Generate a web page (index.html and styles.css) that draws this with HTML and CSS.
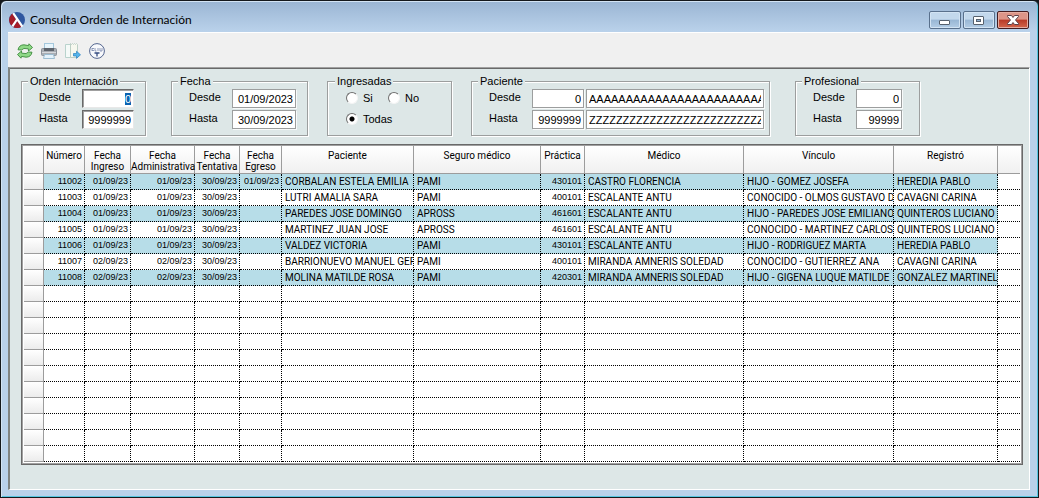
FILE: index.html
```html
<!DOCTYPE html>
<html lang="es">
<head>
<meta charset="utf-8">
<title>Consulta Orden de Internación</title>
<link rel="stylesheet" href="styles.css">
</head>
<body>
<div class="window">
  <header class="titlebar">
    <svg class="icon" viewBox="0 0 16 16" aria-hidden="true">
      <circle cx="8" cy="8" r="8" fill="#2f57a0"/>
      <path d="M2.400 2.400A8 8 0 0 0 3.500 14.600L7.500 8.500 3.500 1.500z M8.500 9L4 15Q8 17.200 12.500 14.700z" fill="#a51c28"/>
      <path d="M4.200 1.200L13.400 14.600M8 7.500L3.400 14.300" stroke="#fff" stroke-width="2.200" fill="none"/>
    </svg>
    <h1 class="title">Consulta Orden de Internación</h1>
    <div class="controls">
      <button class="control" type="button" aria-label="Minimizar"><svg viewBox="0 0 14 12"><rect x="1.500" y="6.500" width="10" height="4" rx=".5" fill="#fff" stroke="#56606d"/></svg></button>
      <button class="control" type="button" aria-label="Maximizar"><svg viewBox="0 0 14 12"><rect x="1.500" y="2.500" width="10" height="8" rx=".5" fill="#fff" stroke="#56606d"/><rect x="4.500" y="5.500" width="4" height="2" fill="#8fafd0" stroke="#56606d"/></svg></button>
      <button class="control control-close" type="button" aria-label="Cerrar"><svg viewBox="0 0 14 12"><path d="M1.500 1.500h4L7 3.500l1.500-2h4v1L9.500 6l3 3.500v1h-4L7 8.500l-1.500 2h-4v-1L4.500 6l-3-3.500z" fill="#fff" stroke="#5d4048"/></svg></button>
    </div>
  </header>
  <nav class="toolbar">
    <button class="tool" type="button" aria-label="Actualizar"><svg class="icon" viewBox="0 0 16 16"><g fill="#8ed886" stroke="#3c8a3c" stroke-width=".9" stroke-linejoin="round"><path d="M1 6.800Q2 1.800 7 1.800L11.500 2.600 12 .8 15.500 4.500 11.500 8 11.300 5.800Q6 4.500 4.500 7z"/><path d="M15 9.200Q14 14.200 9 14.200L4.500 13.400 4 15.200.5 11.500 4.500 8 4.700 10.200Q10 11.500 11.500 9z"/></g></svg></button>
    <button class="tool" type="button" aria-label="Imprimir"><svg class="icon" viewBox="0 0 16 16"><rect x="3.500" y=".5" width="9" height="7" fill="#e8f5fc" stroke="#a5c8dc"/><rect x=".5" y="5.500" width="15" height="7" rx="1" fill="#a9adb3" stroke="#8b9098"/><path d="M3 5h10v3H3z" fill="#5e646d"/><path d="M1 9.500h14" stroke="#d7dade"/><path d="M3.500 11.500h9l1 4h-11z" fill="#e4f2fb" stroke="#9cbdd2"/></svg></button>
    <button class="tool" type="button" aria-label="Exportar"><svg class="icon" viewBox="0 0 16 16"><path d="M.5 1.500h5v13h-5z" fill="#f5faf8" stroke="#b9d3cd"/><path d="M5.500.5l1 1 1-1 1 1 1-1 1 1 1-1 1 1v13h-7z" fill="#f7f8ef" stroke="#bccfc5"/><path d="M8.500 10.500h3v-2.300l4 3.600-4 3.600v-2.400h-3z" fill="#55b5eb" stroke="#277fc0" stroke-width=".7"/></svg></button>
    <button class="tool" type="button" aria-label="Salir"><svg class="icon" viewBox="0 0 16 16"><circle cx="8" cy="8" r="7.400" fill="#f8f9fc" stroke="#53658f" stroke-width="1"/><path d="M3 5.500h2M3 7.500h2M3 5v3M6 5v3h1.500M9 5v3M11 5v3h2V5" stroke="#7787ab" stroke-width=".8" fill="none"/><path d="M5.500 10h5M8 10v3.500" stroke="#344b80" stroke-width="1.300"/></svg></button>
  </nav>
  <main class="client">
    <form class="filters">
      <fieldset class="group">
        <legend>Orden Internación</legend>
        <div class="line"><label for="o1">Desde</label><input class="field sunken code" id="o1" value="0"></div>
        <div class="line"><label for="o2">Hasta</label><input class="field sunken code" id="o2" value="9999999"></div>
      </fieldset>
      <fieldset class="group group-date">
        <legend>Fecha</legend>
        <div class="line"><label for="f1">Desde</label><input class="field date" id="f1" value="01/09/2023"></div>
        <div class="line"><label for="f2">Hasta</label><input class="field date" id="f2" value="30/09/2023"></div>
      </fieldset>
      <fieldset class="group group-state">
        <legend>Ingresadas</legend>
        <div class="line"><label class="choice"><input type="radio" name="ing">Si</label><label class="choice"><input type="radio" name="ing">No</label></div>
        <div class="line"><label class="choice"><input type="radio" name="ing" checked>Todas</label></div>
      </fieldset>
      <fieldset class="group group-patient">
        <legend>Paciente</legend>
        <div class="line"><label for="p1">Desde</label><input class="field code" id="p1" value="0"><input class="field name" aria-label="Nombre desde" value="AAAAAAAAAAAAAAAAAAAAAAAAAAAAAA"></div>
        <div class="line"><label for="p2">Hasta</label><input class="field code" id="p2" value="9999999"><input class="field name" aria-label="Nombre hasta" value="ZZZZZZZZZZZZZZZZZZZZZZZZZZZZZZ"></div>
      </fieldset>
      <fieldset class="group group-pro">
        <legend>Profesional</legend>
        <div class="line"><label for="r1">Desde</label><input class="field short" id="r1" value="0"></div>
        <div class="line"><label for="r2">Hasta</label><input class="field short" id="r2" value="99999"></div>
      </fieldset>
    </form>
    <div class="grid">
      <table class="orders">
        <colgroup><col class="c-mark"><col class="c-num"><col class="c-in"><col class="c-adm"><col class="c-ten"><col class="c-out"><col class="c-pac"><col class="c-seg"><col class="c-pra"><col class="c-med"><col class="c-vin"><col class="c-reg"><col></colgroup>
        <thead><tr><th></th><th>Número</th><th>Fecha<br>Ingreso</th><th>Fecha<br>Administrativa</th><th>Fecha<br>Tentativa</th><th>Fecha<br>Egreso</th><th>Paciente</th><th>Seguro médico</th><th>Práctica</th><th>Médico</th><th>Vínculo</th><th>Registró</th><th></th></tr></thead>
        <tbody>
          <tr class="alt"><td><td class="n">11002<td class="n">01/09/23<td class="n">01/09/23<td class="n">30/09/23<td class="n">01/09/23<td>CORBALAN ESTELA EMILIA<td>PAMI<td class="n">430101<td>CASTRO FLORENCIA<td>HIJO - GOMEZ JOSEFA<td>HEREDIA PABLO<td></tr>
          <tr><td><td class="n">11003<td class="n">01/09/23<td class="n">01/09/23<td class="n">30/09/23<td><td>LUTRI AMALIA SARA<td>PAMI<td class="n">400101<td>ESCALANTE ANTU<td>CONOCIDO - OLMOS GUSTAVO D<td>CAVAGNI CARINA<td></tr>
          <tr class="alt"><td><td class="n">11004<td class="n">01/09/23<td class="n">01/09/23<td class="n">30/09/23<td><td>PAREDES JOSE DOMINGO<td>APROSS<td class="n">461601<td>ESCALANTE ANTU<td>HIJO - PAREDES JOSE EMILIANO<td>QUINTEROS LUCIANO<td></tr>
          <tr><td><td class="n">11005<td class="n">01/09/23<td class="n">01/09/23<td class="n">30/09/23<td><td>MARTINEZ JUAN JOSE<td>APROSS<td class="n">461601<td>ESCALANTE ANTU<td>CONOCIDO - MARTINEZ CARLOS<td>QUINTEROS LUCIANO<td></tr>
          <tr class="alt"><td><td class="n">11006<td class="n">01/09/23<td class="n">01/09/23<td class="n">30/09/23<td><td>VALDEZ VICTORIA<td>PAMI<td class="n">430101<td>ESCALANTE ANTU<td>HIJO - RODRIGUEZ MARTA<td>HEREDIA PABLO<td></tr>
          <tr><td><td class="n">11007<td class="n">02/09/23<td class="n">02/09/23<td class="n">30/09/23<td><td>BARRIONUEVO MANUEL GER<td>PAMI<td class="n">400101<td>MIRANDA AMNERIS SOLEDAD<td>CONOCIDO - GUTIERREZ ANA<td>CAVAGNI CARINA<td></tr>
          <tr class="alt"><td><td class="n">11008<td class="n">02/09/23<td class="n">02/09/23<td class="n">30/09/23<td><td>MOLINA MATILDE ROSA<td>PAMI<td class="n">420301<td>MIRANDA AMNERIS SOLEDAD<td>HIJO - GIGENA LUQUE MATILDE<td>GONZALEZ MARTINEL<td></tr>
          <tr><td><td><td><td><td><td><td><td><td><td><td><td><td></tr>
          <tr><td><td><td><td><td><td><td><td><td><td><td><td><td></tr>
          <tr><td><td><td><td><td><td><td><td><td><td><td><td><td></tr>
          <tr><td><td><td><td><td><td><td><td><td><td><td><td><td></tr>
          <tr><td><td><td><td><td><td><td><td><td><td><td><td><td></tr>
          <tr><td><td><td><td><td><td><td><td><td><td><td><td><td></tr>
          <tr><td><td><td><td><td><td><td><td><td><td><td><td><td></tr>
          <tr><td><td><td><td><td><td><td><td><td><td><td><td><td></tr>
          <tr><td><td><td><td><td><td><td><td><td><td><td><td><td></tr>
          <tr><td><td><td><td><td><td><td><td><td><td><td><td><td></tr>
          <tr><td><td><td><td><td><td><td><td><td><td><td><td><td></tr>
        </tbody>
      </table>
    </div>
  </main>
</div>
<script src="main.js"></script>
</body>
</html>
```
FILE: main.js
```js
// Start with the first order number selected, ready to be overwritten.
const first = document.getElementById("o1");
first.focus();
first.select();
```
FILE: styles.css
```css
* { box-sizing: border-box; }

body {
  margin: 0;
  background: #14181c;
  color: #000;
  font-family: "Liberation Sans", Arial, sans-serif;
  font-size: 11px;
  line-height: 14px;
}

.window {
  display: flex;
  flex-direction: column;
  min-height: 100vh;
  padding: 0 7px 7px 6px;
  border: 1px solid #14181c;
  border-radius: 6px 6px 0 0;
  background: linear-gradient(#9ab5d3, #b9d1ea 30px);
  box-shadow: inset 1px 1px #d3e4f4, inset -1px -1px #57c5e0;
}

.icon { display: block; width: 16px; height: 16px; }

.titlebar {
  display: flex;
  align-items: center;
  gap: 5px;
  height: 31px;
  padding: 6px 2px 0;
}
.title {
  flex: 1;
  margin: 0;
  font: 12px/16px Lato, "Open Sans", sans-serif;
}
.controls { display: flex; gap: 2px; }
.control {
  display: grid;
  place-items: center;
  width: 32px;
  height: 18px;
  padding: 0;
  border: 1px solid #59708c;
  border-radius: 2px;
  background: linear-gradient(#c3d8ec 45%, #98b6d4 50%, #b3cde6);
  box-shadow: inset 0 0 0 1px #d2e3f3;
}
.control svg { width: 14px; height: 12px; }
.control-close {
  border-color: #431c20;
  background: linear-gradient(#dc9588 45%, #b83a27 50%, #d4674d);
  box-shadow: inset 0 0 0 1px #e5ada2;
}

.toolbar {
  display: flex;
  align-items: center;
  gap: 8px;
  height: 35px;
  margin: 0 1px;
  padding: 2px 9px 0;
  border-top: 1px solid #fff;
  background: #f0f0f0;
}
.tool { padding: 0; border: 0; background: none; }

.client {
  flex: 1;
  margin: 0 1px;
  padding: 6px 6px 20px 11px;
  border: solid #fff;
  border-width: 1px 1px 1px 2px;
  border-top-color: #a0a0a0;
  border-left-color: #808482;
  background: #dde7e7;
  box-shadow: inset 0 1px #696969;
}

.filters { display: flex; align-items: flex-start; }
.group {
  width: 125px;
  min-width: 0;
  margin: 0;
  padding: 1px 8px 6px 17px;
  border: 1px solid #9c9e9e;
  box-shadow: 1px 1px #fff, inset 1px 1px #fff;
}
.group legend {
  margin-left: -11px;
  padding: 0 2px;
  background: #dde7e7;
}
.group-date { width: 137px; margin-left: 25px; }
.group-state { width: 125px; margin-left: 19px; padding-left: 18px; }
.group-patient { width: 299px; margin-left: 19px; padding-right: 5px; }
.group-pro { margin-left: 25px; }

.line { display: flex; gap: 2px; height: 19px; }
.line + .line { margin-top: 2px; }
.line > label:first-child { width: 41px; line-height: 16px; }
.group .choice,
.group .choice:first-child {
  display: flex;
  align-items: center;
  gap: 5px;
  width: auto;
  min-width: 40px;
  height: 17px;
}
.choice input {
  appearance: none;
  flex: none;
  width: 12px;
  height: 12px;
  margin: 0;
  border: 1px solid;
  border-color: #707070 #f4f4f4 #f4f4f4 #707070;
  border-radius: 50%;
  background: #fff;
}
.choice input:checked { background: radial-gradient(circle, #000 2px, #fff 3px); }

.field {
  height: 19px;
  padding: 0 2px;
  border: 1px solid #9c9e9e;
  outline: 0;
  background: #fff;
  box-shadow: 1px 1px #f8fafa;
  font: inherit;
  text-align: right;
}
.sunken {
  border-color: #696969 #e8e8e8 #e8e8e8 #696969;
  box-shadow: inset 1px 1px #a0a0a0;
}
.field::selection { background: #0a63b1; color: #fff; }
.code { width: 52px; }
.date { width: 64px; }
.short { width: 46px; }
.name { flex: 1; min-width: 0; text-align: left; }

.grid {
  margin-top: 8px;
  padding: 0 1px 1px;
  border: 2px solid #696969;
  outline: 1px solid #a0a0a0;
  outline-offset: -2px;
  background: #fff;
}
.orders {
  width: 100%;
  table-layout: fixed;
  border-spacing: 0;
  font-family: Roboto, "Liberation Sans", sans-serif;
  font-size: 10px;
}
.c-mark { width: 20px; }
.c-num { width: 41px; }
.c-in { width: 46px; }
.c-adm { width: 64px; }
.c-ten { width: 45px; }
.c-out { width: 42px; }
.c-pac { width: 132px; }
.c-seg { width: 127px; }
.c-pra { width: 44px; }
.c-med { width: 159px; }
.c-vin { width: 150px; }
.c-reg { width: 104px; }

.orders th {
  height: 28px;
  padding: 4px 0 0;
  border: solid #9c9c9c;
  border-width: 0 1px 1px 0;
  background: linear-gradient(#fff, #f0f0f0);
  font-weight: 400;
  line-height: 11px;
  vertical-align: top;
  white-space: nowrap;
}
.orders td {
  height: 16px;
  padding: 0 0 0 3px;
  overflow: hidden;
  border: dotted #000;
  border-width: 0 1px 1px 0;
  line-height: 15px;
  white-space: nowrap;
}
.orders td:first-child {
  border: solid #9c9c9c;
  border-width: 0 1px 1px 0;
  background: linear-gradient(#fff, #ececec);
}
.orders th:last-child,
.orders td:last-child { border-right: 0; }
.alt td { background: #b7dde8; }
.alt td:last-child { background: #fff; }
.orders .n {
  padding: 0 2px 0 0;
  font-family: "Liberation Sans", Arial, sans-serif;
  font-size: 9px;
  text-align: right;
}
```
